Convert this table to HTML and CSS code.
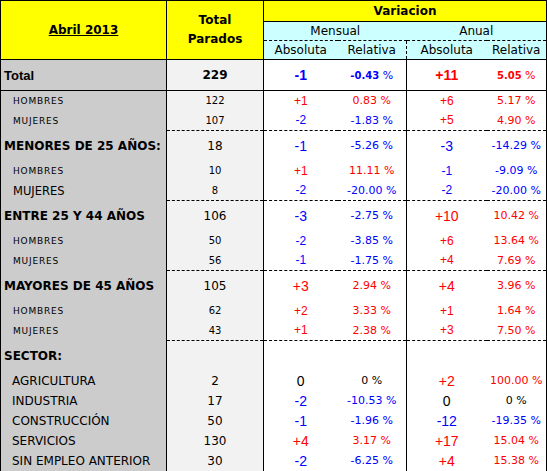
FILE: index.html
```html
<!DOCTYPE html>
<html lang="es">
<head>
    <meta charset="UTF-8">
    <title>Paro registrado - Abril 2013</title>
    <link rel="stylesheet" href="styles.css">
</head>
<body>
    <table class="paro">
        <colgroup>
            <col class="c-label">
            <col class="c-total">
            <col class="c-abs-m">
            <col class="c-rel-m">
            <col class="c-abs-a">
            <col class="c-rel-a">
        </colgroup>
        <thead>
            <tr class="h1">
                <th rowspan="3" class="fecha"><u>Abril 2013</u></th>
                <th rowspan="3" class="parados">Total<br>Parados</th>
                <th colspan="4" class="variacion">Variacion</th>
            </tr>
            <tr class="h2">
                <th colspan="2">Mensual</th>
                <th colspan="2">Anual</th>
            </tr>
            <tr class="h3">
                <th>Absoluta</th>
                <th>Relativa</th>
                <th class="sep">Absoluta</th>
                <th>Relativa</th>
            </tr>
        </thead>
        <tbody>
            <!-- Total -->
            <tr class="total">
                <td class="label">Total</td>
                <td class="num">229</td>
                <td class="abs baja">-1</td>
                <td class="rel baja"><b>-0.43</b> %</td>
                <td class="abs sube anual">+11</td>
                <td class="rel sube"><b>5.05</b> %</td>
            </tr>
            <tr class="sub">
                <td class="label">HOMBRES</td>
                <td class="num">122</td>
                <td class="abs sube">+1</td>
                <td class="rel sube">0.83 %</td>
                <td class="abs sube anual">+6</td>
                <td class="rel sube">5.17 %</td>
            </tr>
            <tr class="sub">
                <td class="label">MUJERES</td>
                <td class="num">107</td>
                <td class="abs baja">-2</td>
                <td class="rel baja">-1.83 %</td>
                <td class="abs sube anual">+5</td>
                <td class="rel sube">4.90 %</td>
            </tr>

            <!-- Menores de 25 -->
            <tr class="grupo">
                <td class="label">MENORES DE 25 AÑOS:</td>
                <td class="num">18</td>
                <td class="abs baja">-1</td>
                <td class="rel baja">-5.26 %</td>
                <td class="abs baja anual">-3</td>
                <td class="rel baja">-14.29 %</td>
            </tr>
            <tr class="sub">
                <td class="label">HOMBRES</td>
                <td class="num">10</td>
                <td class="abs sube">+1</td>
                <td class="rel sube">11.11 %</td>
                <td class="abs baja anual">-1</td>
                <td class="rel baja">-9.09 %</td>
            </tr>
            <tr class="sub">
                <td class="label grande">MUJERES</td>
                <td class="num">8</td>
                <td class="abs baja">-2</td>
                <td class="rel baja">-20.00 %</td>
                <td class="abs baja anual">-2</td>
                <td class="rel baja">-20.00 %</td>
            </tr>

            <!-- Entre 25 y 44 -->
            <tr class="grupo">
                <td class="label">ENTRE 25 Y 44 AÑOS</td>
                <td class="num">106</td>
                <td class="abs baja">-3</td>
                <td class="rel baja">-2.75 %</td>
                <td class="abs sube anual">+10</td>
                <td class="rel sube">10.42 %</td>
            </tr>
            <tr class="sub">
                <td class="label">HOMBRES</td>
                <td class="num">50</td>
                <td class="abs baja">-2</td>
                <td class="rel baja">-3.85 %</td>
                <td class="abs sube anual">+6</td>
                <td class="rel sube">13.64 %</td>
            </tr>
            <tr class="sub">
                <td class="label">MUJERES</td>
                <td class="num">56</td>
                <td class="abs baja">-1</td>
                <td class="rel baja">-1.75 %</td>
                <td class="abs sube anual">+4</td>
                <td class="rel sube">7.69 %</td>
            </tr>

            <!-- Mayores de 45 -->
            <tr class="grupo">
                <td class="label">MAYORES DE 45 AÑOS</td>
                <td class="num">105</td>
                <td class="abs sube">+3</td>
                <td class="rel sube">2.94 %</td>
                <td class="abs sube anual">+4</td>
                <td class="rel sube">3.96 %</td>
            </tr>
            <tr class="sub">
                <td class="label">HOMBRES</td>
                <td class="num">62</td>
                <td class="abs sube">+2</td>
                <td class="rel sube">3.33 %</td>
                <td class="abs sube anual">+1</td>
                <td class="rel sube">1.64 %</td>
            </tr>
            <tr class="sub">
                <td class="label">MUJERES</td>
                <td class="num">43</td>
                <td class="abs sube">+1</td>
                <td class="rel sube">2.38 %</td>
                <td class="abs sube anual">+3</td>
                <td class="rel sube">7.50 %</td>
            </tr>

            <!-- Sector -->
            <tr class="grupo">
                <td class="label">SECTOR:</td>
                <td class="num"></td>
                <td class="abs"></td>
                <td class="rel"></td>
                <td class="abs anual"></td>
                <td class="rel"></td>
            </tr>
            <tr class="sector">
                <td class="label">AGRICULTURA</td>
                <td class="num">2</td>
                <td class="abs">0</td>
                <td class="rel">0 %</td>
                <td class="abs sube anual">+2</td>
                <td class="rel sube">100.00 %</td>
            </tr>
            <tr class="sector">
                <td class="label">INDUSTRIA</td>
                <td class="num">17</td>
                <td class="abs baja">-2</td>
                <td class="rel baja">-10.53 %</td>
                <td class="abs anual">0</td>
                <td class="rel">0 %</td>
            </tr>
            <tr class="sector">
                <td class="label">CONSTRUCCIÓN</td>
                <td class="num">50</td>
                <td class="abs baja">-1</td>
                <td class="rel baja">-1.96 %</td>
                <td class="abs baja anual">-12</td>
                <td class="rel baja">-19.35 %</td>
            </tr>
            <tr class="sector">
                <td class="label">SERVICIOS</td>
                <td class="num">130</td>
                <td class="abs sube">+4</td>
                <td class="rel sube">3.17 %</td>
                <td class="abs sube anual">+17</td>
                <td class="rel sube">15.04 %</td>
            </tr>
            <tr class="sector">
                <td class="label">SIN EMPLEO ANTERIOR</td>
                <td class="num">30</td>
                <td class="abs baja">-2</td>
                <td class="rel baja">-6.25 %</td>
                <td class="abs sube anual">+4</td>
                <td class="rel sube">15.38 %</td>
            </tr>
        </tbody>
    </table>
</body>
</html>
```

FILE: styles.css
```css
html {
    overflow: hidden;
}

body {
    margin: 0;
    font-family: "DejaVu Sans", Verdana, sans-serif;
    color: #000;
    background: #fff;
}

/* Tabla principal */
.paro {
    width: 547px;
    table-layout: fixed;
    border-collapse: collapse;
    border-top: 1px solid #000;
    border-left: 1px solid #000;
    border-right: 1px solid #000;
}

.c-label { width: 166px; }
.c-total { width: 97px; }
.c-abs-m { width: 74px; }
.c-rel-m { width: 69px; }
.c-abs-a { width: 80px; }
.c-rel-a { width: 60px; }

.paro th,
.paro td {
    padding: 0;
    text-align: center;
    vertical-align: middle;
    white-space: nowrap;
}

/* Cabecera */
.paro thead th {
    font-size: 12px;
    font-weight: normal;
    background: #ccffff;
}

.paro .h1 th {
    background: #ffff00;
    font-weight: bold;
}

.h1 { height: 21px; }
.h2 { height: 19px; }
.h3 { height: 19px; }

.fecha,
.parados {
    border-right: 1px solid #000;
    border-bottom: 1px solid #000;
}

.fecha u {
    text-underline-offset: 1px;
}

.parados {
    line-height: 19px;
}

.variacion {
    border-bottom: 1px solid #000;
}

.paro .h2 th {
    border-bottom: 1px dashed #000;
}

.paro .h3 th {
    border-bottom: 1px solid #000;
}

.paro .h3 th.sep {
    border-left: 1px dashed #000;
}

/* Cuerpo */
.paro td.label {
    text-align: left;
    background: #cccccc;
    padding-left: 3px;
    font-size: 12px;
    font-weight: bold;
}

.paro td.num {
    background: #f2f2f2;
    border-left: 1px solid #000;
    border-right: 1px solid #000;
    font-size: 12px;
}

.paro td.anual {
    border-left: 1px solid #000;
}

.abs {
    font-family: "Liberation Sans", Arial, sans-serif;
    font-size: 14px;
}

.rel {
    font-size: 11px;
    padding-left: 2px;
}

.sube { color: #ff0000; }
.baja { color: #0000ff; }

tr.total { height: 31px; }
tr.grupo { height: 30px; }
tr.sub,
tr.sector { height: 20px; }

.total td {
    border-bottom: 1px solid #000;
}

.paro .total td.label {
    font-family: "Liberation Sans", Arial, sans-serif;
    font-size: 13px;
}

.paro .total td.num {
    font-weight: bold;
}

.total .abs {
    font-weight: bold;
}

.total .rel b {
    font-size: 10px;
}

.grupo td:not(.label) {
    border-top: 1px dashed #000;
}

.paro .sub td.label {
    padding-left: 12px;
    font-size: 9px;
    font-weight: normal;
    letter-spacing: 0.8px;
}

.paro .sub td.label.grande {
    font-size: 11.5px;
    letter-spacing: 0;
}

.paro .sub td.num {
    font-size: 10px;
}

.sub .abs {
    font-size: 12px;
}

.paro .sector td.label {
    padding-left: 11px;
    font-weight: normal;
}
```
